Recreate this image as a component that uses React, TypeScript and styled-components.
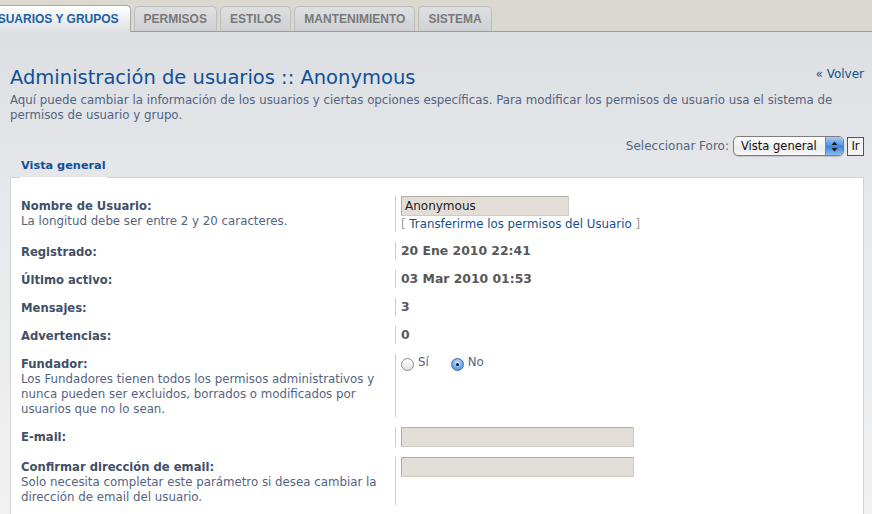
import styled, { createGlobalStyle } from "styled-components";

const GlobalStyle = createGlobalStyle`
  html, body {
    margin: 0;
    padding: 0;
  }
  body {
    background: linear-gradient(#dadde1 0px, #e6e8eb 200px, #f1f1f1 514px);
    font-family: "DejaVu Sans", Verdana, sans-serif;
    min-height: 514px;
    overflow: hidden;
  }
`;

const TabBar = styled.nav`
  height: 31px;
  background: #dbd8d0;
  border-bottom: 1px solid #9c9c9c;
  display: flex;
  align-items: flex-end;
  gap: 3px;
  margin-left: -23px;
`;

const Tab = styled.div<{ $active?: boolean }>`
  font-family: "Liberation Sans", Arial, sans-serif;
  font-size: 12px;
  font-weight: bold;
  height: ${(p) => (p.$active ? "26px" : "24px")};
  line-height: ${(p) => (p.$active ? "26px" : "24px")};
  padding: 0 ${(p) => (p.$active ? "11px" : "9px")};
  border: 1px solid ${(p) => (p.$active ? "#a9a9a9" : "#bdbdbd")};
  border-bottom: none;
  border-radius: 5px 5px 0 0;
  color: ${(p) => (p.$active ? "#1d5fa3" : "#797979")};
  background: ${(p) =>
    p.$active
      ? "linear-gradient(#ffffff, #dde0e4)"
      : "linear-gradient(#dedfe1, #cfd1d4)"};
  margin-bottom: ${(p) => (p.$active ? "-1px" : "0")};
`;

const Main = styled.div`
  padding: 0 8px 0 10px;
`;

const Header = styled.div`
  display: flex;
  justify-content: space-between;
  align-items: flex-start;
  margin-top: 34px;
`;

const Title = styled.h1`
  margin: 0;
  font-size: 19.5px;
  font-weight: normal;
  line-height: 24px;
  color: #115098;
`;

const Back = styled.a`
  font-size: 12px;
  color: #105289;
  text-decoration: none;
  line-height: 16px;
`;

const Intro = styled.p`
  margin: 3px 0 0;
  font-size: 11.8px;
  line-height: 15px;
  color: #536482;
  padding-right: 20px;
`;

const ForumSelect = styled.div`
  display: flex;
  justify-content: flex-end;
  align-items: center;
  gap: 3px;
  margin-top: 13px;
  font-size: 12px;
  color: #536482;
`;

const SelectLabel = styled.span`
  margin-right: 1px;
`;

const SelectBox = styled.div`
  width: 109px;
  height: 18px;
  border: 1px solid #7d7d7d;
  border-radius: 5px;
  background: linear-gradient(#ffffff, #ececec 60%, #f6f6f6);
  display: flex;
  align-items: center;
  overflow: hidden;
  box-shadow: 0 1px 1px rgba(0, 0, 0, 0.15);
`;

const SelectText = styled.span`
  flex: 1;
  padding-left: 7px;
  font-size: 11.5px;
  color: #111;
`;

const Stepper = styled.span`
  width: 17px;
  height: 100%;
  background: linear-gradient(#a9cdf5, #4d8fe0 50%, #3a7fd9 51%, #8dbcf0);
  border-left: 1px solid #6a8fbf;
  display: flex;
  align-items: center;
  justify-content: center;
`;

const GoButton = styled.button`
  width: 17px;
  height: 19px;
  padding: 0;
  border: 1px solid #555;
  background: #f3f3f3;
  font-family: "DejaVu Sans", sans-serif;
  font-size: 11.5px;
  color: #111;
`;

const Fieldset = styled.section`
  margin-top: 1px;
`;

const Legend = styled.div`
  margin-left: 10px;
  width: fit-content;
  white-space: nowrap;
  padding: 0 1px 3px 1px;
  font-size: 11.3px;
  font-weight: bold;
  line-height: 17px;
  color: #115098;
  border-bottom: 1px solid #ffffff;
  position: relative;
  z-index: 1;
  margin-bottom: -1px;
`;

const Panel = styled.div`
  background: #ffffff;
  border: 1px solid #d2d2d2;
  border-bottom: none;
  padding: 13px 0 10px 10px;
  min-height: 330px;
`;

const Row = styled.div`
  display: grid;
  grid-template-columns: 374px 1fr;
  padding: 5px 0;
`;

const Label = styled.div`
  padding-top: 2px;
`;

const LabelTitle = styled.div`
  font-size: 11.6px;
  font-weight: bold;
  line-height: 16px;
  color: #425067;
`;

const Explain = styled.div`
  font-size: 11.8px;
  line-height: 15px;
  color: #536482;
  width: 362px;
`;

const Value = styled.div`
  border-left: 1px solid #cccccc;
  padding-left: 5px;
  min-height: 18px;
`;

const StaticValue = styled.div`
  font-size: 12.4px;
  font-weight: bold;
  line-height: 18px;
  color: #585858;
`;

const TextInput = styled.div<{ $width: number }>`
  width: ${(p) => p.$width}px;
  height: 18px;
  box-sizing: content-box;
  border: 1px solid #b3aea4;
  border-right-color: #cfcbc3;
  border-bottom-color: #cfcbc3;
  background: #e2ded7;
  font-size: 12px;
  line-height: 18px;
  padding-left: 3px;
  color: #222;
`;

const LinkLine = styled.div`
  font-size: 11.8px;
  line-height: 16px;
  color: #9a9a9a;
  a {
    color: #105289;
    text-decoration: none;
  }
`;

const RadioGroup = styled.div`
  display: flex;
  gap: 22px;
  padding-top: 1px;
`;

const RadioItem = styled.label`
  display: flex;
  align-items: flex-start;
  gap: 4px;
  font-size: 11.8px;
  line-height: 14px;
  color: #536482;
`;

const RadioDot = styled.span<{ $checked?: boolean }>`
  width: 11px;
  height: 11px;
  margin-top: 3px;
  border-radius: 50%;
  border: 1px solid ${(p) => (p.$checked ? "#3f6fae" : "#8a8a8a")};
  background: ${(p) =>
    p.$checked
      ? "radial-gradient(circle at 50% 35%, #d8ebff 0%, #7fb3ee 45%, #3e82d8 100%)"
      : "linear-gradient(#fdfdfd, #e3e3e3)"};
  display: flex;
  align-items: center;
  justify-content: center;
  &::after {
    content: "";
    width: 3px;
    height: 3px;
    border-radius: 50%;
    background: #111;
    display: ${(p) => (p.$checked ? "block" : "none")};
  }
`;

const rows = [
  { label: "Registrado:", value: "20 Ene 2010 22:41" },
  { label: "Último activo:", value: "03 Mar 2010 01:53" },
  { label: "Mensajes:", value: "3" },
  { label: "Advertencias:", value: "0" },
];

const tabs = ["PERMISOS", "ESTILOS", "MANTENIMIENTO", "SISTEMA"];

export default function App() {
  return (
    <>
      <GlobalStyle />
      <TabBar>
        <Tab $active>USUARIOS Y GRUPOS</Tab>
        {tabs.map((t) => (
          <Tab key={t}>{t}</Tab>
        ))}
      </TabBar>
      <Main>
        <Header>
          <Title>Administración de usuarios :: Anonymous</Title>
          <Back href="#">« Volver</Back>
        </Header>
        <Intro>
          Aquí puede cambiar la información de los usuarios y ciertas opciones
          específicas. Para modificar los permisos de usuario usa el sistema de
          permisos de usuario y grupo.
        </Intro>
        <ForumSelect>
          <SelectLabel>Seleccionar Foro:</SelectLabel>
          <SelectBox>
            <SelectText>Vista general</SelectText>
            <Stepper>
              <svg width="7" height="11" viewBox="0 0 7 11">
                <path d="M3.5 0.5 L6.5 4 L0.5 4 Z" fill="#1a1a1a" />
                <path d="M3.5 10.5 L6.5 7 L0.5 7 Z" fill="#1a1a1a" />
              </svg>
            </Stepper>
          </SelectBox>
          <GoButton>Ir</GoButton>
        </ForumSelect>
        <Fieldset>
          <Legend>Vista general</Legend>
          <Panel>
            <Row>
              <Label>
                <LabelTitle>Nombre de Usuario:</LabelTitle>
                <Explain>La longitud debe ser entre 2 y 20 caracteres.</Explain>
              </Label>
              <Value>
                <TextInput $width={163}>Anonymous</TextInput>
                <LinkLine>
                  [ <a href="#">Transferirme los permisos del Usuario</a> ]
                </LinkLine>
              </Value>
            </Row>
            {rows.map((r) => (
              <Row key={r.label}>
                <Label>
                  <LabelTitle>{r.label}</LabelTitle>
                </Label>
                <Value>
                  <StaticValue>{r.value}</StaticValue>
                </Value>
              </Row>
            ))}
            <Row>
              <Label>
                <LabelTitle>Fundador:</LabelTitle>
                <Explain>
                  Los Fundadores tienen todos los permisos administrativos y
                  nunca pueden ser excluidos, borrados o modificados por
                  usuarios que no lo sean.
                </Explain>
              </Label>
              <Value>
                <RadioGroup>
                  <RadioItem>
                    <RadioDot />
                    Sí
                  </RadioItem>
                  <RadioItem>
                    <RadioDot $checked />
                    No
                  </RadioItem>
                </RadioGroup>
              </Value>
            </Row>
            <Row>
              <Label>
                <LabelTitle>E-mail:</LabelTitle>
              </Label>
              <Value>
                <TextInput $width={228} />
              </Value>
            </Row>
            <Row>
              <Label>
                <LabelTitle>Confirmar dirección de email:</LabelTitle>
                <Explain>
                  Solo necesita completar este parámetro si desea cambiar la
                  dirección de email del usuario.
                </Explain>
              </Label>
              <Value>
                <TextInput $width={228} />
              </Value>
            </Row>
          </Panel>
        </Fieldset>
      </Main>
    </>
  );
}
